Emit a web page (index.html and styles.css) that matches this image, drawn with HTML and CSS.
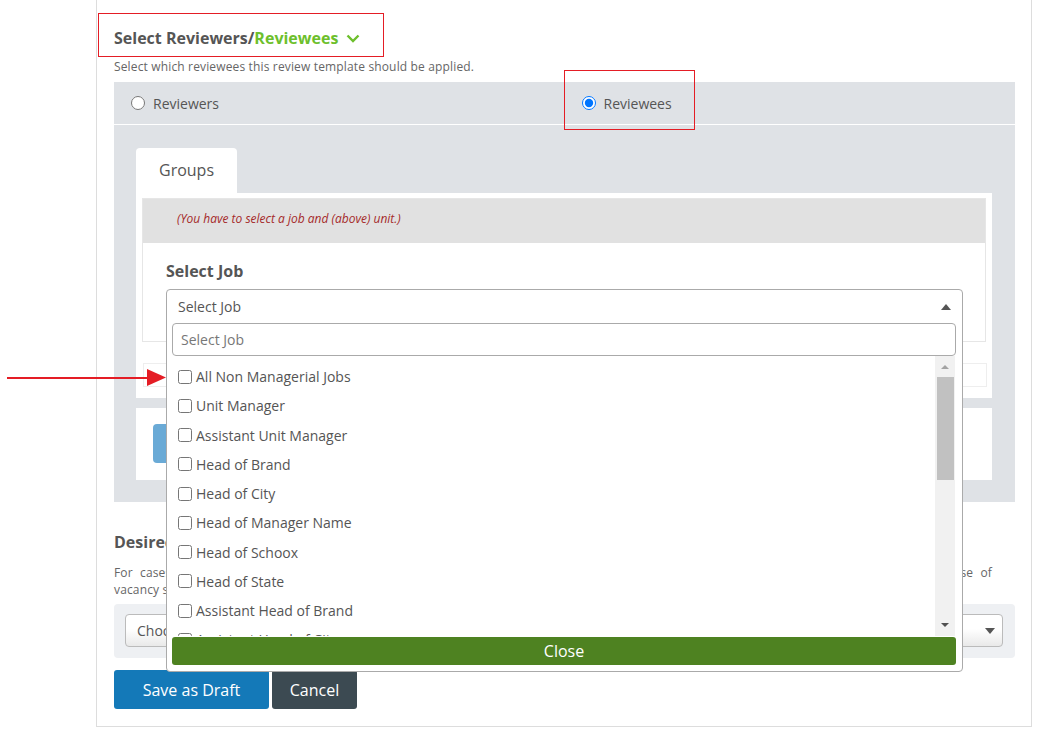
FILE: index.html
```html
<!DOCTYPE html>
<html lang="en">
<head>
    <meta charset="UTF-8">
    <meta name="viewport" content="width=device-width, initial-scale=1.0">
    <title>Review Template</title>
    <link rel="stylesheet" href="styles.css">
</head>
<body>
    <div class="page">
        <h2 class="section-title">Select Reviewers/<span class="accent">Reviewees</span>
            <svg class="chevron" width="14" height="9" viewBox="0 0 14 9"><polyline points="1.5,1.5 7,7 12.5,1.5"/></svg>
        </h2>
        <p class="hint">Select which reviewees this review template should be applied.</p>

        <div class="panel">
            <div class="radio-row">
                <label class="radio-col"><input type="radio" name="target"> Reviewers</label>
                <label class="radio-col"><input type="radio" name="target" checked> Reviewees</label>
            </div>
            <div class="panel-body">
                <div class="tabs">
                    <div class="tab">Groups</div>
                </div>
                <div class="tab-content">
                    <div class="job-box">
                        <div class="job-note">(You have to select a job and (above) unit.)</div>
                        <div class="job-body">
                            <h3 class="job-title">Select Job</h3>
                            <div class="select-wrap">
                                <div class="dropdown">
                                    <div class="dd-head">
                                        <span>Select Job</span>
                                        <span class="caret-up"></span>
                                    </div>
                                    <input class="dd-search" type="text" placeholder="Select Job">
                                    <div class="dd-body">
                                        <ul class="dd-list">
                                            <li><input type="checkbox"> All Non Managerial Jobs</li>
                                            <li><input type="checkbox"> Unit Manager</li>
                                            <li><input type="checkbox"> Assistant Unit Manager</li>
                                            <li><input type="checkbox"> Head of Brand</li>
                                            <li><input type="checkbox"> Head of City</li>
                                            <li><input type="checkbox"> Head of Manager Name</li>
                                            <li><input type="checkbox"> Head of Schoox</li>
                                            <li><input type="checkbox"> Head of State</li>
                                            <li><input type="checkbox"> Assistant Head of Brand</li>
                                            <li><input type="checkbox"> Assistant Head of City</li>
                                            <li><input type="checkbox"> Assistant Head of State</li>
                                        </ul>
                                        <div class="dd-scroll">
                                            <span class="arrow-up"></span>
                                            <span class="thumb"></span>
                                            <span class="arrow-down"></span>
                                        </div>
                                    </div>
                                    <button class="dd-close">Close</button>
                                </div>
                            </div>
                        </div>
                    </div>
                    <input class="unit-field" type="text">
                </div>
                <div class="tab-actions">
                    <button class="btn-add">Add Group</button>
                </div>
            </div>
        </div>

        <h2 class="section-title desired">Desired Reviewer</h2>
        <p class="hint hint-desired">
            <span class="line-full">For cases where the selected reviewer is not available, choose who should complete the review instead. This option is also used in case of</span>
            vacancy situations, or when the position has been left empty.
        </p>
        <div class="panel-light">
            <div class="fake-select">
                <span>Choose...</span>
                <span class="caret-down"></span>
            </div>
        </div>

        <div class="actions">
            <button class="btn btn-save">Save as Draft</button>
            <button class="btn btn-cancel">Cancel</button>
        </div>
    </div>

    <div class="mark mark-title"></div>
    <div class="mark mark-radio"></div>
    <svg class="mark-arrow" width="170" height="22" viewBox="0 0 170 22">
        <line x1="7" y1="11" x2="150" y2="11"/>
        <polygon points="147,2 166,10.5 147,19"/>
    </svg>
</body>
</html>
```

FILE: styles.css
```css
body {
    margin: 0;
    font-family: "Open Sans", "Liberation Sans", sans-serif;
    color: #555;
    background: #fff;
}

.page {
    box-sizing: border-box;
    width: 936px;
    margin-left: 96px;
    border: 1px solid #ddd;
    border-top: none;
    padding: 27px 16px 17px 17px;
}

.section-title {
    margin: 0;
    font-size: 16px;
    line-height: 22px;
    font-weight: 700;
    color: #555;
}

.section-title .accent {
    color: #6dbf2c;
}

.chevron {
    margin-left: 3px;
    vertical-align: middle;
    position: relative;
    top: -1px;
}

.chevron polyline {
    fill: none;
    stroke: #6dbf2c;
    stroke-width: 2.4;
}

.hint {
    margin: 9px 0 0;
    font-size: 12px;
    line-height: 17px;
    letter-spacing: 0.15px;
    color: #666;
}

.hint-desired {
    margin-top: 11px;
}

.line-full {
    display: block;
    width: 878px;
    text-align: justify;
    text-align-last: justify;
}

.panel {
    margin-top: 7px;
    background: #dfe2e6;
}

.radio-row {
    display: flex;
    height: 42px;
    border-bottom: 1px solid #fff;
}

.radio-col {
    flex: 1;
    display: flex;
    align-items: center;
    padding-left: 17px;
    font-size: 14px;
    gap: 8px;
}

.radio-col input {
    margin: 0;
    width: 14px;
    height: 14px;
}

.panel-body {
    padding: 23px 23px 22px 22px;
}

.tab {
    display: inline-block;
    height: 45px;
    line-height: 45px;
    padding: 0 23px;
    background: #fff;
    border-radius: 4px 4px 0 0;
    font-size: 16px;
    color: #555;
}

.tab-content {
    background: #fff;
    padding: 5px 6px 11px 6px;
}

.job-box {
    border: 1px solid #e6e6e6;
}

.job-note {
    height: 44px;
    box-sizing: border-box;
    padding: 11px 0 0 34px;
    line-height: 17px;
    background: #e1e1e1;
    font-size: 12px;
    font-style: italic;
    color: #a52a2a;
}

.job-body {
    padding: 17px 22px 20px 23px;
}

.job-title {
    margin: 0 0 7px;
    font-size: 16px;
    line-height: 22px;
    font-weight: 700;
    color: #555;
}

.select-wrap {
    position: relative;
    height: 32px;
}

.dropdown {
    position: absolute;
    top: 0;
    left: 0;
    right: 0;
    z-index: 5;
    height: 383px;
    box-sizing: border-box;
    background: #fff;
    border: 1px solid #aaa;
    border-radius: 4px;
    padding: 0 6px 6px 5px;
}

.dd-head {
    display: flex;
    align-items: center;
    justify-content: space-between;
    height: 33px;
    padding: 0 5px 0 6px;
    font-size: 14px;
    color: #555;
}

.caret-up {
    width: 0;
    height: 0;
    border-left: 5.5px solid transparent;
    border-right: 5.5px solid transparent;
    border-bottom: 6px solid #555;
}

.dd-search {
    display: block;
    box-sizing: border-box;
    width: 100%;
    height: 33px;
    margin: 0;
    padding: 0 8px;
    border: 1px solid #aaa;
    border-radius: 4px;
    font-family: inherit;
    font-size: 14px;
    color: #555;
}

.dd-search::placeholder {
    color: #777;
}

.dd-body {
    display: flex;
    height: 280px;
    overflow: hidden;
}

.dd-list {
    flex: 1;
    list-style: none;
    margin: 0;
    padding: 6px 0 0 6px;
}

.dd-list li {
    display: flex;
    align-items: center;
    gap: 4px;
    height: 29.25px;
    font-size: 14px;
    color: #555;
}

.dd-list input {
    margin: 0;
    width: 14px;
    height: 14px;
}

.dd-scroll {
    position: relative;
    width: 20px;
    margin-right: 1px;
    background: #f1f1f1;
}

.dd-scroll .thumb {
    position: absolute;
    left: 2px;
    right: 1px;
    top: 21px;
    height: 103px;
    background: #c1c1c1;
}

.arrow-up,
.arrow-down {
    position: absolute;
    left: 6px;
    width: 0;
    height: 0;
    border-left: 4px solid transparent;
    border-right: 4px solid transparent;
}

.arrow-up {
    top: 9px;
    border-bottom: 4px solid #a3a3a3;
}

.arrow-down {
    top: 267px;
    border-top: 4px solid #505050;
}

.dd-close {
    display: block;
    width: 100%;
    height: 28px;
    margin-top: 1px;
    border: none;
    border-radius: 3px;
    background: #4e8221;
    color: #fff;
    font-family: inherit;
    font-size: 16px;
}

.unit-field {
    display: block;
    box-sizing: border-box;
    width: 844px;
    height: 24px;
    margin: 21px 0 0 1px;
    border: 1px solid #eee;
}

.tab-actions {
    margin-top: 10px;
    background: #fff;
    padding: 16px 17px 17px;
}

.btn-add {
    display: block;
    height: 39px;
    padding: 0 20px;
    border: none;
    border-radius: 4px;
    background: #6aaad6;
    color: #fff;
    font-family: inherit;
    font-size: 16px;
}

.desired {
    margin-top: 29px;
}

.panel-light {
    margin-top: 6px;
    padding: 10px 12px 11px 11px;
    background: #eef0f3;
    border-radius: 4px;
}

.fake-select {
    display: flex;
    align-items: center;
    justify-content: space-between;
    box-sizing: border-box;
    height: 33px;
    padding: 0 7px 0 11px;
    border: 1px solid #bbb;
    border-radius: 4px;
    background: linear-gradient(#fff 45%, #e9e9e9);
    font-size: 14px;
    color: #555;
}

.caret-down {
    width: 0;
    height: 0;
    border-left: 5.5px solid transparent;
    border-right: 5.5px solid transparent;
    border-top: 6px solid #555;
}

.actions {
    display: flex;
    gap: 3px;
    margin-top: 12px;
}

.btn {
    height: 39px;
    border: none;
    border-radius: 3px;
    color: #fff;
    font-family: inherit;
    font-size: 16px;
}

.btn-save {
    width: 155px;
    background: #1479b8;
}

.btn-cancel {
    width: 85px;
    background: #3c4a52;
}

/* annotations drawn over the screenshot */
.mark {
    position: absolute;
    border: 1px solid #e41d25;
}

.mark-title {
    left: 98px;
    top: 13px;
    width: 284px;
    height: 42px;
}

.mark-radio {
    left: 564px;
    top: 70px;
    width: 129px;
    height: 58px;
}

.mark-arrow {
    position: absolute;
    left: 0;
    top: 367px;
}

.mark-arrow line {
    stroke: #e41d25;
    stroke-width: 2;
}

.mark-arrow polygon {
    fill: #e41d25;
}
```
